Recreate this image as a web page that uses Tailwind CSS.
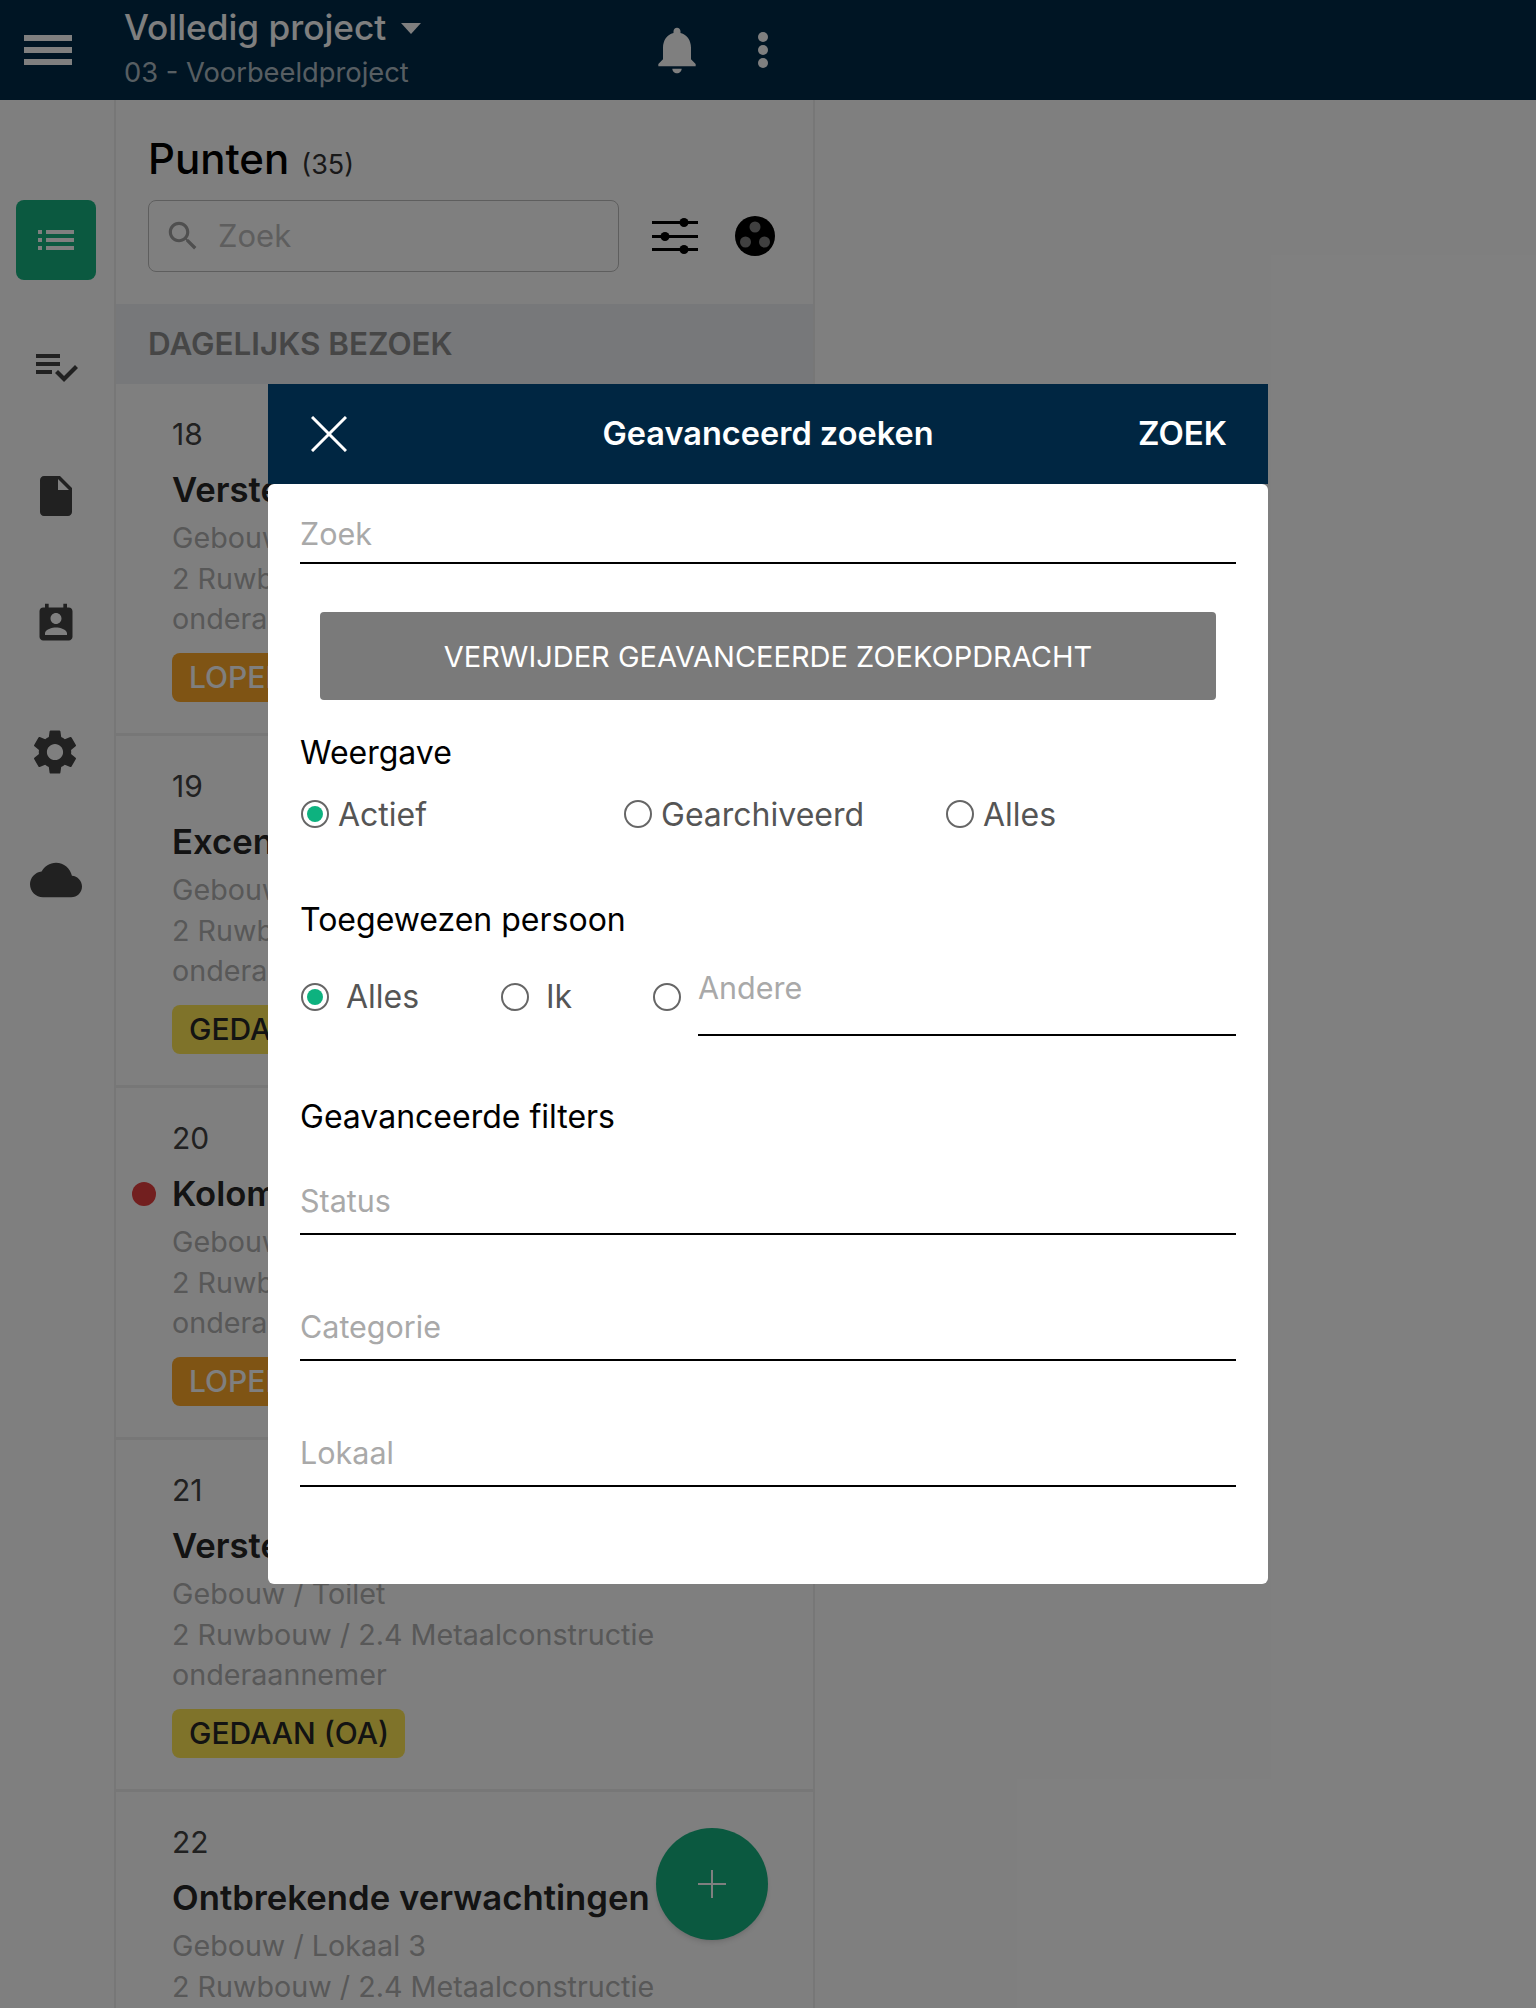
<!DOCTYPE html>
<html lang="en">
<head>
    <meta charset="UTF-8">
    <meta name="viewport" content="width=device-width, initial-scale=1.0">
    <title>Punten</title>
    <script src="https://cdn.jsdelivr.net/npm/@tailwindcss/browser@4"></script>
</head>
<body class="relative h-[2008px] w-[1536px] overflow-hidden bg-white font-['Inter',sans-serif] text-black">

    <!-- Top bar -->
    <header class="flex h-[100px] items-center bg-[#002a48] text-white">
        <div class="ml-[24px] flex w-[48px] flex-col gap-[6px]">
            <div class="h-[6px] bg-white"></div>
            <div class="h-[6px] bg-white"></div>
            <div class="h-[6px] bg-white"></div>
        </div>
        <div class="ml-[52px] mt-[-9px] w-[531px]">
            <div class="mt-[-3px] flex h-[56px] items-center">
                <span class="text-[35.200px] font-medium leading-[56px]">Volledig project</span>
                <svg class="ml-[15px] mt-[4px] h-[11px] w-[20px]" viewBox="0 0 20 11"><path d="M0 0h20L10 11z" fill="#fff"/></svg>
            </div>
            <div class="mt-[1px] text-[27.300px] leading-[34px] text-white/70">03 - Voorbeeldproject</div>
        </div>
        <svg class="ml-[-6px] h-[56px] w-[56px]" viewBox="0 0 24 24" fill="#fff"><path d="M12 22c1.1 0 2-.9 2-2h-4c0 1.1.89 2 2 2zm6-6v-5c0-3.07-1.64-5.64-4.5-6.32V4c0-.83-.67-1.5-1.5-1.5s-1.5.67-1.5 1.5v.68C7.63 5.36 6 7.92 6 11v5l-2 2v1h16v-1l-2-2z"/></svg>
        <div class="ml-[53px] flex flex-col gap-[3px]">
            <div class="h-[10px] w-[10px] rounded-full bg-white"></div>
            <div class="h-[10px] w-[10px] rounded-full bg-white"></div>
            <div class="h-[10px] w-[10px] rounded-full bg-white"></div>
        </div>
    </header>

    <div class="flex h-[1908px]">
        <!-- Side navigation -->
        <nav class="w-[114px] pt-[76px]">
            <div class="flex h-[128px] items-center justify-center pr-[3px]">
                <div class="flex h-[80px] w-[80px] items-center justify-center rounded-[8px] bg-[#16b280]">
                    <svg class="h-[20px] w-[36px]" viewBox="0 0 36 20" fill="#fff"><rect y="0" width="4" height="4"/><rect y="8" width="4" height="4"/><rect y="16" width="4" height="4"/><rect x="8" y="0" width="28" height="4"/><rect x="8" y="8" width="28" height="4"/><rect x="8" y="16" width="28" height="4"/></svg>
                </div>
            </div>
            <div class="flex h-[128px] items-center justify-center pb-[4px] pr-[3px]">
                <svg class="h-[48px] w-[48px]" viewBox="0 0 24 24" fill="#424242"><path d="M14 10H2v2h12v-2zm0-4H2v2h12V6zM2 16h8v-2H2v2zm19.5-4.5L23 13l-6.99 7-4.51-4.5L13 14l3.01 3 5.49-5.5z"/></svg>
            </div>
            <div class="flex h-[128px] items-center justify-center pr-[2px]">
                <svg class="h-[48px] w-[48px]" viewBox="0 0 24 24" fill="#424242"><path d="M6 2c-1.1 0-1.99.9-1.99 2L4 20c0 1.1.89 2 1.99 2H18c1.1 0 2-.9 2-2V8l-6-6H6zm7 7V3.5L18.5 9H13z"/></svg>
            </div>
            <div class="flex h-[128px] items-center justify-center pr-[2px]">
                <svg class="h-[44px] w-[44px]" viewBox="0 0 24 24" fill="#424242"><path d="M19 3h-1V1h-2v2H8V1H6v2H5c-1.11 0-2 .9-2 2v14c0 1.1.89 2 2 2h14c1.1 0 2-.9 2-2V5c0-1.1-.9-2-2-2zm-7 3c1.66 0 3 1.34 3 3s-1.34 3-3 3-3-1.34-3-3 1.34-3 3-3zm6 12H6v-1c0-2 4-3.1 6-3.1s6 1.1 6 3.1v1z"/></svg>
            </div>
            <div class="flex h-[128px] items-center justify-center pr-[4px]">
                <svg class="h-[54px] w-[54px]" viewBox="0 0 24 24" fill="#424242"><path d="M19.14 12.94c.04-.3.06-.61.06-.94 0-.32-.02-.64-.07-.94l2.03-1.58c.18-.14.23-.41.12-.61l-1.92-3.32c-.12-.22-.37-.29-.59-.22l-2.39.96c-.5-.38-1.03-.7-1.62-.94l-.36-2.54c-.04-.24-.24-.41-.48-.41h-3.84c-.24 0-.43.17-.47.41l-.36 2.54c-.59.24-1.13.57-1.62.94l-2.39-.96c-.22-.08-.47 0-.59.22L2.74 8.87c-.12.21-.08.47.12.61l2.03 1.58c-.05.3-.09.63-.09.94s.02.64.07.94l-2.03 1.58c-.18.14-.23.41-.12.61l1.92 3.32c.12.22.37.29.59.22l2.39-.96c.5.38 1.03.7 1.62.94l.36 2.54c.05.24.24.41.48.41h3.84c.24 0 .44-.17.47-.41l.36-2.54c.59-.24 1.13-.56 1.62-.94l2.39.96c.22.08.47 0 .59-.22l1.92-3.32c.12-.22.07-.47-.12-.61l-2.01-1.58zM12 15.6c-1.98 0-3.6-1.62-3.6-3.6s1.62-3.6 3.6-3.6 3.6 1.62 3.6 3.6-1.62 3.6-3.6 3.6z"/></svg>
            </div>
            <div class="flex h-[128px] items-center justify-center pr-[2px]">
                <svg class="h-[52px] w-[52px]" viewBox="0 0 24 24" fill="#424242"><path d="M19.35 10.04C18.67 6.59 15.64 4 12 4 9.11 4 6.6 5.64 5.35 8.04 2.34 8.36 0 10.91 0 14c0 3.31 2.69 6 6 6h13c2.76 0 5-2.24 5-5 0-2.64-2.05-4.78-4.65-4.96z"/></svg>
            </div>
        </nav>

        <!-- Points list -->
        <main class="h-full w-[701px] border-x-2 border-[#eeeeee]">
            <div class="h-[204px] pl-[32px] pr-[36px]">
                <div class="flex h-[100px] items-baseline pt-[29px]">
                    <span class="text-[42px] font-medium leading-[60px]">Punten</span>
                    <span class="ml-[12px] text-[27px] text-[#333]">(35)</span>
                </div>
                <div class="flex items-center">
                    <div class="flex h-[72px] w-[471px] items-center rounded-[8px] border border-[#bdbdbd] pl-[15px]">
                        <svg class="h-[38px] w-[38px]" viewBox="0 0 24 24" fill="#9e9e9e"><path d="M15.5 14h-.79l-.28-.27C15.41 12.59 16 11.11 16 9.5 16 5.91 13.09 3 9.5 3S3 5.91 3 9.5 5.91 16 9.5 16c1.61 0 3.09-.59 4.23-1.57l.27.28v.79l5 4.99L20.49 19l-4.99-5zm-6 0C7.01 14 5 11.99 5 9.5S7.01 5 9.5 5 14 7.01 14 9.5 11.99 14 9.5 14z"/></svg>
                        <span class="ml-[16px] text-[31px] text-[#bdbdbd]">Zoek</span>
                    </div>
                    <svg class="ml-[33px] h-[36px] w-[46px]" viewBox="0 0 46 36" fill="#000"><rect y="3" width="46" height="3"/><circle cx="32" cy="4.500" r="4.500"/><rect y="17" width="46" height="3"/><circle cx="13" cy="18.500" r="4.500"/><rect y="30" width="46" height="3"/><circle cx="32" cy="31.500" r="4.500"/></svg>
                    <svg class="ml-[37px] h-[40px] w-[40px]" viewBox="0 0 40 40"><circle cx="20" cy="20" r="20" fill="#000"/><circle cx="20" cy="11" r="5.500" fill="#808080"/><circle cx="10.500" cy="26" r="5.500" fill="#808080"/><circle cx="29.500" cy="26" r="5.500" fill="#808080"/></svg>
                </div>
            </div>
            <div class="flex h-[80px] items-center bg-[#eef0f4] pl-[32px] pt-px text-[31.400px] font-semibold text-[#8c8c8c]">DAGELIJKS BEZOEK</div>

            <article class="relative h-[352px] border-b-[3px] border-[#eeeeee] pl-[56px] pt-[30px]">
                <div class="text-[30px] leading-[40px] text-[#424242]">18</div>
                <div class="mt-[13px] text-[34.700px] font-semibold leading-[44px] text-[#262626]">Verstevigingen</div>
                <div class="mt-[7px] text-[28.700px] leading-[40.500px] text-[#b0b0b0]">Gebouw / Lokaal 1<br>2 Ruwbouw / 2.4 Metaalconstructie<br>onderaannemer</div>
                <div class="mt-[13px] inline-flex h-[49px] items-center rounded-[8px] bg-[#ffa828] pl-[17px] pr-[16px] text-[30px] font-medium text-white">LOPEND</div>
            </article>
            <article class="relative h-[352px] border-b-[3px] border-[#eeeeee] pl-[56px] pt-[30px]">
                <div class="text-[30px] leading-[40px] text-[#424242]">19</div>
                <div class="mt-[13px] text-[34.700px] font-semibold leading-[44px] text-[#262626]">Excentrische kolom</div>
                <div class="mt-[7px] text-[28.700px] leading-[40.500px] text-[#b0b0b0]">Gebouw / Lokaal 2<br>2 Ruwbouw / 2.4 Metaalconstructie<br>onderaannemer</div>
                <div class="mt-[13px] inline-flex h-[49px] items-center rounded-[8px] bg-[#ffe654] pl-[17px] pr-[16px] text-[30px] font-medium text-[#262626]">GEDAAN (OA)</div>
            </article>
            <article class="relative h-[352px] border-b-[3px] border-[#eeeeee] pl-[56px] pt-[30px]">
                <div class="text-[30px] leading-[40px] text-[#424242]">20</div>
                <div class="absolute left-[16px] top-[94px] h-[24px] w-[24px] rounded-full bg-[#e53e3e]"></div>
                <div class="mt-[13px] text-[34.700px] font-semibold leading-[44px] text-[#262626]">Kolom</div>
                <div class="mt-[7px] text-[28.700px] leading-[40.500px] text-[#b0b0b0]">Gebouw / Lokaal 2<br>2 Ruwbouw / 2.4 Metaalconstructie<br>onderaannemer</div>
                <div class="mt-[13px] inline-flex h-[49px] items-center rounded-[8px] bg-[#ffa828] pl-[17px] pr-[16px] text-[30px] font-medium text-white">LOPEND</div>
            </article>
            <article class="relative h-[352px] border-b-[3px] border-[#eeeeee] pl-[56px] pt-[30px]">
                <div class="text-[30px] leading-[40px] text-[#424242]">21</div>
                <div class="mt-[13px] text-[34.700px] font-semibold leading-[44px] text-[#262626]">Verstevigingen</div>
                <div class="mt-[7px] text-[28.700px] leading-[40.500px] text-[#b0b0b0]">Gebouw / Toilet<br>2 Ruwbouw / 2.4 Metaalconstructie<br>onderaannemer</div>
                <div class="mt-[13px] inline-flex h-[49px] items-center rounded-[8px] bg-[#ffe654] pl-[17px] pr-[16px] text-[30px] font-medium text-[#262626]">GEDAAN (OA)</div>
            </article>
            <article class="relative h-[216px] overflow-hidden pl-[56px] pt-[30px]">
                <div class="text-[30px] leading-[40px] text-[#424242]">22</div>
                <div class="mt-[13px] text-[34.700px] font-semibold leading-[44px] text-[#262626]">Ontbrekende verwachtingen</div>
                <div class="mt-[7px] text-[28.700px] leading-[40.500px] text-[#b0b0b0]">Gebouw / Lokaal 3<br>2 Ruwbouw / 2.4 Metaalconstructie</div>
            </article>
        </main>
    </div>

    <!-- Add button -->
    <div class="absolute left-[656px] top-[1828px] flex h-[112px] w-[112px] items-center justify-center rounded-full bg-[#16b280] shadow-md">
        <svg class="h-[28px] w-[28px]" viewBox="0 0 28 28" fill="#fff"><rect x="13" width="2" height="28"/><rect y="13" width="28" height="2"/></svg>
    </div>

    <!-- Dim layer -->
    <div class="absolute inset-0 bg-black/50"></div>

    <!-- Advanced search dialog -->
    <section class="absolute left-[268px] top-[384px] w-[1000px]">
        <div class="grid h-[100px] grid-cols-[1fr_auto_1fr] items-center bg-[#002642] text-white">
            <svg class="ml-[43px] h-[36px] w-[36px]" viewBox="0 0 36 36" stroke="#fff" stroke-width="3"><path d="M1 1l34 34M35 1L1 35"/></svg>
            <div class="text-[32.500px] font-semibold">Geavanceerd zoeken</div>
            <div class="pr-[41px] text-right text-[33px] font-semibold">ZOEK</div>
        </div>
        <form class="h-[1100px] rounded-[6px] bg-white px-[32px] pt-[20px]">
            <input placeholder="Zoek" class="block h-[60px] w-full border-b-2 border-black text-[30.500px] outline-none placeholder:text-[#a9a9a9]">
            <div class="mx-[20px] mt-[48px] flex h-[88px] items-center justify-center rounded-[4px] bg-[#7a7a7a] pt-px text-[29px] text-white">VERWIJDER GEAVANCEERDE ZOEKOPDRACHT</div>

            <div class="mt-[33px] text-[32px] leading-[40px]">Weergave</div>
            <div class="mt-[27px] flex h-[28px] items-center text-[32px] text-[#555]">
                <div class="ml-px flex w-[323px] items-center">
                    <span class="flex h-[28px] w-[28px] items-center justify-center rounded-full border-2 border-[#666]"><span class="h-[16px] w-[16px] rounded-full bg-[#0db27f]"></span></span>
                    <span class="ml-[9px] pt-px">Actief</span>
                </div>
                <div class="flex w-[322px] items-center">
                    <span class="h-[28px] w-[28px] rounded-full border-2 border-[#666]"></span>
                    <span class="ml-[9px] pt-px">Gearchiveerd</span>
                </div>
                <div class="flex items-center">
                    <span class="h-[28px] w-[28px] rounded-full border-2 border-[#666]"></span>
                    <span class="ml-[9px] pt-px">Alles</span>
                </div>
            </div>

            <div class="mt-[72px] text-[32px] leading-[40px]">Toegewezen persoon</div>
            <div class="mt-[21px] flex items-start text-[32px] text-[#555]">
                <div class="ml-px mt-[22px] flex h-[28px] w-[200px] items-center">
                    <span class="flex h-[28px] w-[28px] items-center justify-center rounded-full border-2 border-[#666]"><span class="h-[16px] w-[16px] rounded-full bg-[#0db27f]"></span></span>
                    <span class="ml-[17px]">Alles</span>
                </div>
                <div class="mt-[22px] flex h-[28px] w-[152px] items-center">
                    <span class="h-[28px] w-[28px] rounded-full border-2 border-[#666]"></span>
                    <span class="ml-[17px]">Ik</span>
                </div>
                <span class="mt-[22px] h-[28px] w-[28px] rounded-full border-2 border-[#666]"></span>
                <input placeholder="Andere" class="ml-[17px] block h-[75px] flex-1 border-b-2 border-black pb-[20px] text-[30.500px] outline-none placeholder:text-[#a9a9a9]">
            </div>

            <div class="mt-[61px] text-[32px] leading-[40px]">Geavanceerde filters</div>
            <input placeholder="Status" class="mt-[34px] block h-[64px] w-full border-b-2 border-black pb-[4px] text-[30.500px] outline-none placeholder:text-[#a9a9a9]">
            <input placeholder="Categorie" class="mt-[62px] block h-[64px] w-full border-b-2 border-black pb-[4px] text-[30.500px] outline-none placeholder:text-[#a9a9a9]">
            <input placeholder="Lokaal" class="mt-[62px] block h-[64px] w-full border-b-2 border-black pb-[4px] text-[30.500px] outline-none placeholder:text-[#a9a9a9]">
        </form>
    </section>
</body>
</html>
